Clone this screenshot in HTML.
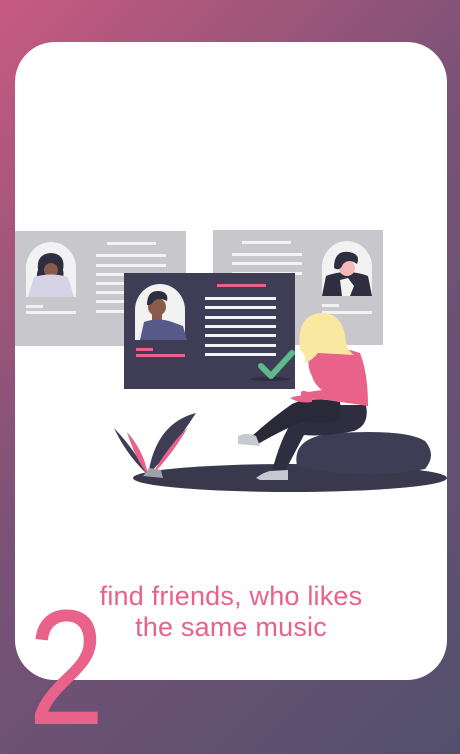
<!DOCTYPE html>
<html><head><meta charset="utf-8"><style>
html,body{margin:0;padding:0;width:460px;height:754px;overflow:hidden;}
body{position:relative;background:linear-gradient(135deg,#c85a80 0%,#7a5276 45%,#52506e 100%);font-family:"Liberation Sans",sans-serif;}
.card{position:absolute;left:15px;top:42px;width:432px;height:638px;background:#fff;border-radius:40px;}
svg{position:absolute;left:0;top:0;}
.t{position:absolute;left:70px;width:322px;text-align:center;color:#e8628a;font-size:27px;font-weight:300;letter-spacing:0.2px;line-height:31px;top:581px;}
.two{position:absolute;left:28px;top:586px;height:150px;color:#e8628a;font-size:164px;line-height:164px;font-weight:300;transform:scaleX(0.84);transform-origin:0 0;}
</style></head><body>
<div class="card"></div>
<svg width="460" height="754" viewBox="0 0 460 754">
<rect x="15" y="231" width="171" height="115" fill="#c8c8cc"/>
<path d="M26 297 V268 a25 26 0 0 1 50 0 V297Z" fill="#f2f2f2"/>
<path d="M38 270 q-2 -16 13 -17 q15 1 12 17 q2 8 -3 10 h-20 q-5 -2 -2 -10z" fill="#2f2e41"/>
<circle cx="51" cy="270" r="7" fill="#8a5a4a"/>
<path d="M28 297 l6 -20 q17 -5 34 0 l6 20z" fill="#d6d3e6"/>
<rect x="26" y="305" width="17" height="3" fill="#f2f2f2"/><rect x="26" y="311" width="50" height="3" fill="#f2f2f2"/>
<rect x="107" y="242" width="49" height="3" fill="#f2f2f2"/>
<g fill="#f2f2f2"><rect x="96" y="254" width="70" height="3"/><rect x="96" y="264" width="70" height="3"/><rect x="96" y="273" width="70" height="3"/><rect x="96" y="282" width="70" height="3"/><rect x="96" y="291" width="70" height="3"/><rect x="96" y="300" width="70" height="3"/><rect x="96" y="310" width="70" height="3"/></g>
<rect x="213" y="230" width="170" height="115" fill="#c8c8cc"/>
<path d="M322 296 V267 a25 26 0 0 1 50 0 V296Z" fill="#f2f2f2"/>
<path d="M322 296 l4 -20 q21 -8 42 0 l4 20z" fill="#2f2e41"/>
<path d="M340 280 l8 -2 l6 8 l-4 10 h-8z" fill="#f2f2f2"/>
<circle cx="347" cy="268" r="8" fill="#f5b9b5"/>
<path d="M334 268 q0 -18 15 -16 q12 2 8 12 q-8 -6 -14 0 q-3 8 -9 4z" fill="#2f2e41"/>
<rect x="322" y="304" width="17" height="3" fill="#f2f2f2"/><rect x="322" y="311" width="50" height="3" fill="#f2f2f2"/>
<rect x="242" y="241" width="49" height="3" fill="#f2f2f2"/>
<g fill="#f2f2f2"><rect x="232" y="253" width="70" height="3"/><rect x="232" y="262" width="70" height="3"/><rect x="232" y="272" width="70" height="3"/></g>
<rect x="124" y="273" width="171" height="116" fill="#3f3d56"/>
<path d="M135 340 V310 a25 26 0 0 1 50 0 V340Z" fill="#f2f2f2"/>
<circle cx="157" cy="307" r="9" fill="#8a5a4a"/>
<rect x="152" y="312" width="10" height="10" fill="#8a5a4a"/>
<path d="M147 305 q0 -15 12 -14 q10 1 8 10 q-8 -4 -13 0 q-3 5 -7 4z" fill="#2f2e41"/>
<path d="M140 340 l4 -18 q14 -5 28 0 l11 4 l4 14z" fill="#575a89"/>
<rect x="136" y="348" width="17" height="3" fill="#e8628a"/><rect x="136" y="354" width="49" height="3" fill="#e8628a"/>
<rect x="217" y="284" width="49" height="3" fill="#e8628a"/>
<g fill="#f2f2f2"><rect x="205" y="297" width="71" height="3"/><rect x="205" y="306" width="71" height="3"/><rect x="205" y="316" width="71" height="3"/><rect x="205" y="325" width="71" height="3"/><rect x="205" y="334" width="71" height="3"/><rect x="205" y="344" width="71" height="3"/><rect x="205" y="353" width="71" height="3"/></g>
<ellipse cx="270" cy="379" rx="20" ry="2" fill="#2f2e41"/>
<path d="M261 366 l10 10 l21 -23" stroke="#5fb98a" stroke-width="6" fill="none" stroke-linecap="round" stroke-linejoin="round"/>
<ellipse cx="290" cy="478" rx="157" ry="14" fill="#3a384d"/>
<path d="M114 428 q12 26 33 46 q-12 -24 -33 -46z" fill="#3f3d56"/>
<path d="M127 432 q8 26 21 43 q-4 -24 -21 -43z" fill="#e8628a"/>
<path d="M196 413 q-40 10 -48 62 q22 -22 48 -62z" fill="#3f3d56"/>
<path d="M188 427 q-22 22 -36 48 q20 -20 36 -48z" fill="#e8628a"/>
<path d="M143 476 l6 -8 l12 2 l2 8z" fill="#a0a0a8"/>
<path d="M297 466 q-6 -30 40 -33 q70 -4 88 8 q12 14 0 28 q-60 12 -128 -3z" fill="#3f3d56"/>
<path d="M366 405 q4 20 -12 26 q-30 6 -50 4 l-20 38 l-12 -2 q8 -30 18 -46 q8 -20 28 -20z" fill="#2f2e41"/>
<path d="M340 402 q-30 -6 -48 2 q-20 14 -40 32 l6 8 q24 -14 44 -22 q30 4 40 -4z" fill="#2a2938"/>
<path d="M238 436 q8 -4 18 0 l4 10 l-22 -2z" fill="#c8c8d0"/>
<path d="M256 478 q8 -6 14 -7 l18 -1 l0 10 l-28 0z" fill="#c8c8d0"/>
<path d="M310 350 q25 -6 50 3 q8 20 8 53 l-40 -6 l-26 -2 q-4 -10 6 -6 l14 -2 q-8 -6 -10 -14 q-6 -10 -2 -26z" fill="#e8628a"/>
<path d="M290 398 q10 -4 22 -2 l0 6 q-12 2 -22 -4z" fill="#e8628a"/>
<path d="M300 350 q-4 -36 22 -37 q22 0 24 30 q2 8 8 12 l-36 -2 q-6 8 -14 10 q4 -6 -4 -13z" fill="#f9e8a0"/>
</svg>
<div class="two">2</div>
<div class="t">find friends, who likes<br>the same music</div>
</body></html>
